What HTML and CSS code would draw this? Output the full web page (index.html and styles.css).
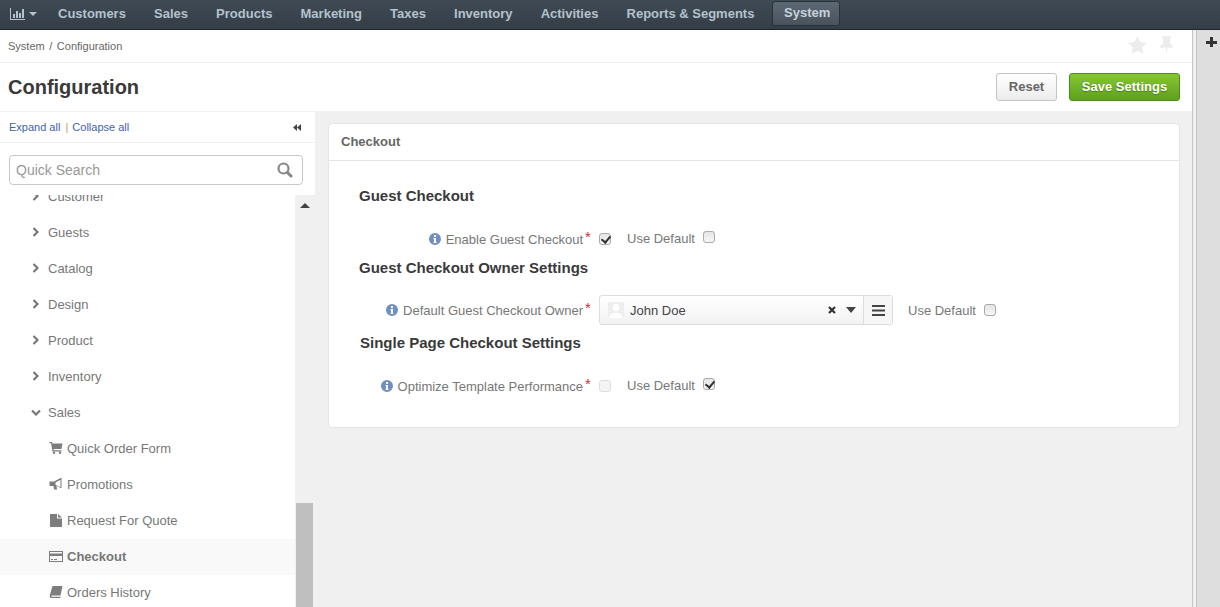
FILE: index.html
```html
<!DOCTYPE html>
<html lang="en">
<head>
  <meta charset="UTF-8" />
  <title>Configuration</title>
  <link rel="stylesheet" href="styles.css">
</head>
<body>
  <nav class="topnav">
    <a class="nav-dash" href="#">
      <svg width="15" height="12" viewBox="0 0 15 12"><path fill="currentColor" d="M0 0h1v11h14v1H0zM3 6h2v4H3zM6 3h2v7H6zM9 5h2v5H9zM12 1h2v9h-2z"/></svg>
      <span class="caret"></span>
    </a>
    <a href="#">Customers</a>
    <a href="#">Sales</a>
    <a href="#">Products</a>
    <a href="#">Marketing</a>
    <a href="#">Taxes</a>
    <a href="#">Inventory</a>
    <a href="#">Activities</a>
    <a href="#">Reports &amp; Segments</a>
    <a class="active" href="#">System</a>
  </nav>

  <div class="layout">
    <div class="page">
      <div class="breadcrumbs">
        <span>System / Configuration</span>
        <div class="crumb-icons">
          <svg width="19" height="18" viewBox="0 0 20 19"><path fill="#ececec" d="M10 0l3 6.300 7 .9-5.100 4.800 1.300 7L10 15.600 3.800 19l1.300-7L0 7.200l7-.9z"/></svg>
          <svg width="13" height="18" viewBox="0 0 14 19"><path fill="#ececec" d="M2 0h10v1.500l-1.500 1v5L14 11v1.500H8L7 19l-1-6.500H0V11l3.500-3.500v-5L2 1.500z"/></svg>
        </div>
      </div>

      <header class="title-bar">
        <h1>Configuration</h1>
        <div class="actions">
          <button class="btn">Reset</button>
          <button class="btn btn-save">Save Settings</button>
        </div>
      </header>

      <div class="columns">
        <aside class="sidebar">
          <div class="tree-links">
            <span><a href="#">Expand all</a> <i>|</i> <a href="#">Collapse all</a></span>
            <svg width="8" height="7" viewBox="0 0 8 7"><path fill="#444" d="M4 0v7L0 3.500zM8 0v7L4 3.500z"/></svg>
          </div>
          <div class="search-wrap">
            <div class="search">
              <span>Quick Search</span>
              <svg width="16" height="16" viewBox="0 0 16 16"><circle cx="6.500" cy="6.500" r="5" fill="none" stroke="#888" stroke-width="2.200"/><path stroke="#888" stroke-width="3" stroke-linecap="round" d="M10.500 10.500l3.500 3.500"/></svg>
            </div>
          </div>
          <div class="tree-area">
            <ul class="tree">
              <li><svg class="chev" width="7" height="10" viewBox="0 0 7 10"><path fill="none" stroke="currentColor" stroke-width="2.200" d="M1.500 1l4 4-4 4"/></svg>Customer</li>
              <li><svg class="chev" width="7" height="10" viewBox="0 0 7 10"><path fill="none" stroke="currentColor" stroke-width="2.200" d="M1.500 1l4 4-4 4"/></svg>Guests</li>
              <li><svg class="chev" width="7" height="10" viewBox="0 0 7 10"><path fill="none" stroke="currentColor" stroke-width="2.200" d="M1.500 1l4 4-4 4"/></svg>Catalog</li>
              <li><svg class="chev" width="7" height="10" viewBox="0 0 7 10"><path fill="none" stroke="currentColor" stroke-width="2.200" d="M1.500 1l4 4-4 4"/></svg>Design</li>
              <li><svg class="chev" width="7" height="10" viewBox="0 0 7 10"><path fill="none" stroke="currentColor" stroke-width="2.200" d="M1.500 1l4 4-4 4"/></svg>Product</li>
              <li><svg class="chev" width="7" height="10" viewBox="0 0 7 10"><path fill="none" stroke="currentColor" stroke-width="2.200" d="M1.500 1l4 4-4 4"/></svg>Inventory</li>
              <li><svg class="chev down" width="10" height="7" viewBox="0 0 10 7"><path fill="none" stroke="currentColor" stroke-width="2.200" d="M1 1.500l4 4 4-4"/></svg>Sales</li>
              <li class="sub"><svg class="ico" width="13" height="12" viewBox="0 0 13 12"><path fill="currentColor" d="M0 0h2.500l.5 1.500h10L12 7H4l.3 1.200H12V9.500H3L1.600 1.300H0z"/><circle cx="4.500" cy="10.800" r="1.200" fill="currentColor"/><circle cx="10.500" cy="10.800" r="1.200" fill="currentColor"/></svg>Quick Order Form</li>
              <li class="sub"><svg class="ico" width="13" height="12" viewBox="0 0 13 12"><path fill="currentColor" fill-rule="evenodd" d="M0 3.500h4.500L11 0h1v10h-1L7 7.800l.6 3.700H4.500L4 8H0zM6 4.500v2.200l5 2.500V1.800z"/></svg>Promotions</li>
              <li class="sub"><svg class="ico" width="12" height="13" viewBox="0 0 12 13"><path fill="currentColor" d="M0 0h7v4.500h5V13H0zM8 0l4 3.500H8z"/></svg>Request For Quote</li>
              <li class="sub current"><svg class="ico" width="14" height="11" viewBox="0 0 14 11"><path fill="currentColor" fill-rule="evenodd" d="M0 0h14v11H0zM1 1v1.500h12V1zM1 5v5h12V5zM2 8h2v1H2zM5 8h3v1H5z"/></svg>Checkout</li>
              <li class="sub"><svg class="ico" width="13" height="12" viewBox="0 0 13 12"><path fill="currentColor" d="M3 0h10l-2 9.500H2.500c-1 0-1 1.300 0 1.300H11V12H2C0 12 0 10 .5 8.500z"/></svg>Orders History</li>
            </ul>
            <div class="tree-scroll">
              <span class="arrow-up"></span>
              <span class="thumb"></span>
            </div>
          </div>
        </aside>

        <main class="content">
          <section class="panel">
            <div class="panel-head">Checkout</div>
            <div class="panel-body">
              <h3>Guest Checkout</h3>
              <div class="field f-one">
                <label><svg class="info" width="12" height="12" viewBox="0 0 12 12"><use href="#info"/></svg>Enable Guest Checkout<em>*</em></label>
                <span class="check on"></span>
                <span class="use-default">Use Default</span>
                <span class="check high"></span>
              </div>
              <h3>Guest Checkout Owner Settings</h3>
              <div class="field f-two">
                <label><svg class="info" width="12" height="12" viewBox="0 0 12 12"><use href="#info"/></svg>Default Guest Checkout Owner<em>*</em></label>
                <div class="select-group">
                  <div class="select">
                    <span class="avatar"><svg width="16" height="16" viewBox="0 0 16 16"><path fill="#fff" d="M8 1.500c2 0 3.200 1.600 3.200 3.800S10 9.500 8 9.500 4.800 7.500 4.800 5.300 6 1.500 8 1.500zM1 16c0-3.500 3-4.500 5-5.300h4c2 .8 5 1.800 5 5.300z"/></svg></span>
                    <span class="owner">John Doe</span>
                    <svg class="clear" width="8" height="8" viewBox="0 0 8 8"><path stroke="#333" stroke-width="2.200" d="M1 1l6 6M7 1L1 7"/></svg>
                    <span class="caret dark"></span>
                  </div>
                  <div class="menu-btn"><svg width="13" height="11" viewBox="0 0 13 11"><path fill="#444" d="M0 0h13v2H0zM0 4.500h13v2H0zM0 9h13v2H0z"/></svg></div>
                </div>
                <span class="use-default">Use Default</span>
                <span class="check"></span>
              </div>
              <h3 class="shift">Single Page Checkout Settings</h3>
              <div class="field f-three">
                <label><svg class="info" width="12" height="12" viewBox="0 0 12 12"><use href="#info"/></svg>Optimize Template Performance<em>*</em></label>
                <span class="check off"></span>
                <span class="use-default">Use Default</span>
                <span class="check on high"></span>
              </div>
            </div>
          </section>
        </main>
      </div>
    </div>

    <div class="side-strip">
      <div class="strip-main"><span class="plus"></span></div>
    </div>
  </div>

  <svg width="0" height="0" class="defs">
    <symbol id="info" viewBox="0 0 12 12">
      <path fill="#6f8fc4" fill-rule="evenodd" d="M6 0a6 6 0 1 1 0 12A6 6 0 0 1 6 0zM5 2v2h2V2zM4.500 5v1H5v3H4.500v1h3V9H7V5z"/>
    </symbol>
  </svg>
</body>
</html>
```

FILE: styles.css
```css
* { box-sizing: border-box; }
html, body { height: 100%; }
body { margin: 0; height: 607px; overflow: hidden; background: #fff; color: #777; font-family: "Liberation Sans", Arial, sans-serif; font-size: 13px; }
a { text-decoration: none; }
ul { list-style: none; margin: 0; padding: 0; }
.defs { position: absolute; }

.topnav { display: flex; align-items: center; height: 30px; padding: 0 0 2px 10px; background: linear-gradient(#3f4a54, #353e47); border-bottom: 1px solid #20262c; }
.topnav a { color: #b4c2cc; font-size: 13px; font-weight: bold; margin-right: 28.100px; }
.topnav .nav-dash { display: flex; align-items: center; gap: 4px; margin-right: 21px; }
.topnav .active { background: linear-gradient(#5d6975, #48525c); color: #c6d1da; padding: 0 10px 0 12px; height: 25px; line-height: 24px; margin: 0 0 0 -10.500px; border-radius: 3px; box-shadow: inset 0 0 0 1px #2a3239; }
.caret { display: inline-block; width: 0; height: 0; border-left: 4px solid transparent; border-right: 4px solid transparent; border-top: 4px solid #b4c2cc; }
.caret.dark { border-left-width: 5px; border-right-width: 5px; border-top: 6px solid #444; margin-left: 10px; }

.layout { display: flex; height: 577px; }
.page { width: 1192px; display: flex; flex-direction: column; }

.breadcrumbs { display: flex; justify-content: space-between; align-items: center; height: 33px; padding: 0 19px 0 8px; font-size: 11px; color: #666; word-spacing: 1.500px; border-bottom: 1px solid #f0f0f0; }
.crumb-icons { display: flex; gap: 13px; align-items: center; margin-top: -3px; }

.title-bar { display: flex; justify-content: space-between; align-items: center; height: 49px; padding: 0 12px 0 8px; border-bottom: 1px solid #f0f0f0; }
.title-bar h1 { margin: 0; font-size: 20px; color: #3a3a3a; }
.actions { display: flex; gap: 12px; margin-top: -1px; }
.btn { width: 61px; height: 28px; padding: 0; border: 1px solid #c4c4c4; border-radius: 3px; background: linear-gradient(#fff, #ececec); color: #666; font: bold 13px "Liberation Sans", Arial, sans-serif; }
.btn-save { width: 111px; border-color: #4f8a1e; background: linear-gradient(#85c832, #5fa01e); color: #fff; text-shadow: 0 1px 1px #4a7d16; }

.columns { flex: 1; display: flex; min-height: 0; }
.sidebar { width: 315px; display: flex; flex-direction: column; background: #f0f0f0; }
.tree-links { display: flex; justify-content: space-between; align-items: center; height: 31px; padding: 0 14px 0 9px; background: #fff; border-bottom: 1px solid #f0f0f0; font-size: 11px; }
.tree-links a { color: #3f5fb5; }
.tree-links i { color: #c99a5a; font-style: normal; margin: 0 1px 0 2px; }
.search-wrap { background: #fff; padding: 12px 12px 10px 9px; height: 52px; }
.search { display: flex; justify-content: space-between; align-items: center; height: 30px; padding: 0 9px 0 6px; border: 1px solid #c8c8c8; border-radius: 4px; color: #999; font-size: 14px; }
.tree-area { flex: 1; display: flex; min-height: 0; overflow: hidden; }
.tree { width: 295px; background: #fff; margin-top: -16px; flex-shrink: 0; height: 430px; overflow: hidden; }
.tree li { display: flex; align-items: center; height: 36px; padding: 0 0 2px 32px; color: #777; }
.chev { color: #777; margin-right: 9px; flex-shrink: 0; }
.chev.down { margin-left: -1px; margin-right: 7px; }
.tree li.sub { padding-left: 49px; }
.ico { width: 14px; margin-right: 4px; flex-shrink: 0; color: #7d7d7d; }
.tree li.current { background: #f9f9f9; font-weight: bold; }
.tree-scroll { position: relative; flex: 1; }
.arrow-up { position: absolute; top: 8px; left: 5px; width: 0; height: 0; border-left: 5px solid transparent; border-right: 5px solid transparent; border-bottom: 5px solid #444; }
.thumb { position: absolute; top: 308px; left: 1px; width: 17px; height: 104px; background: #bfbfbf; }

.content { flex: 1; background: #f0f0f0; padding: 11px 12px 0 13px; }
.panel { height: 305px; background: #fff; border: 1px solid #e4e4e4; border-radius: 4px; }
.panel-head { height: 37px; line-height: 35px; padding-left: 12px; border-bottom: 1px solid #e4e4e4; color: #666; font-weight: bold; font-size: 13px; }
.panel-body { padding-top: 26px; }
.panel-body h3 { margin: 0 0 0 30px; height: 19px; line-height: 17px; color: #3a3a3a; font-size: 15px; }
.panel-body h3.shift { margin-left: 31px; }
.field { display: flex; align-items: center; height: 28px; }
.f-one { margin-top: 19px; margin-bottom: 6px; }
.f-two { margin-top: 17px; margin-bottom: 9px; height: 30px; }
.f-three { margin-top: 19px; }
.field label { width: 262px; flex-shrink: 0; display: flex; justify-content: flex-end; align-items: center; color: #777; }
.info { margin-right: 5px; }
.field em { display: block; width: 8px; text-indent: 2px; color: #c33; font-style: normal; line-height: 1; font-size: 15px; margin-top: -5px; }
.check { display: inline-block; position: relative; width: 12px; height: 12px; flex-shrink: 0; border: 1px solid #aaa; border-radius: 3px; background: linear-gradient(#e6e6e6, #f6f6f6); }
.check.on::after { content: ""; position: absolute; left: 3px; top: 0; width: 4px; height: 7px; border: solid #333; border-width: 0 2px 2px 0; transform: rotate(40deg); }
.check.off { border-color: #ddd; background: #f4f4f4; }
.check.high { margin-bottom: 4px; }
.field > .check:nth-of-type(1) { margin-left: 8px; }
.use-default { margin: 0 8px 0 16px; padding-bottom: 2px; color: #777; }
.f-two .use-default { margin-left: 15px; padding-bottom: 0; }
.select-group { display: flex; height: 30px; margin-left: 8px; width: 294px; border: 1px solid #ddd; border-radius: 3px; background: linear-gradient(#fff, #f2f2f2); }
.select { flex: 1; display: flex; align-items: center; padding: 0 7px 0 8px; }
.avatar { display: flex; align-items: center; justify-content: center; width: 16px; height: 16px; background: #eee; margin-right: 6px; }
.owner { flex: 1; color: #444; }
.menu-btn { width: 29px; display: flex; align-items: center; justify-content: center; border-left: 1px solid #ddd; background: #f6f6f6; }

.side-strip { flex: 1; display: flex; background: #f0f0f0; border-left: 1px solid #c4c4c4; padding-left: 3px; }
.strip-main { flex: 1; background: #dedede; border-left: 1px solid #c4c4c4; padding: 7px 0 0 9px; }
.plus { display: block; width: 11px; height: 10px; background: linear-gradient(#333, #333) 0 4px / 11px 3px no-repeat, linear-gradient(#333, #333) 4px 0 / 3px 10px no-repeat; }
```
